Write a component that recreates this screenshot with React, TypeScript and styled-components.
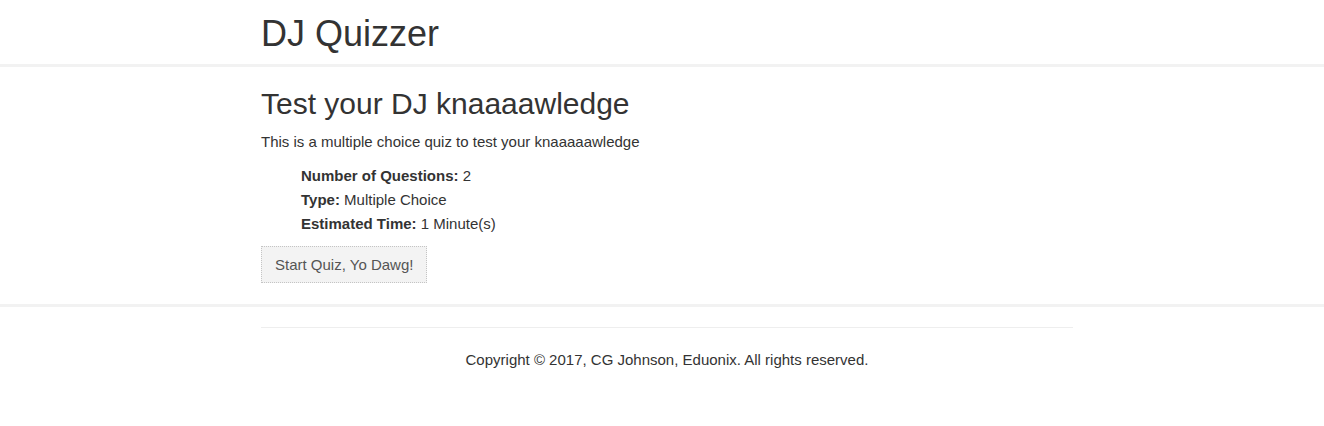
import React from 'react';
import styled, { createGlobalStyle } from 'styled-components';

const GlobalStyle = createGlobalStyle`
  body {
    margin: 0;
    background: #fff;
    color: #333;
    font-family: "Liberation Sans", Arial, Helvetica, sans-serif;
    font-size: 15px;
    line-height: 20px;
  }
`;

const quizInfo = [
  { label: 'Number of Questions:', value: '2' },
  { label: 'Type:', value: 'Multiple Choice' },
  { label: 'Estimated Time:', value: '1 Minute(s)' },
];

const App = () => {
  return (
    <>
      <GlobalStyle />
      <Header>
        <Container>
          <Brand>DJ Quizzer</Brand>
        </Container>
      </Header>

      <Main>
        <Container>
          <Title>Test your DJ knaaaawledge</Title>
          <Lead>This is a multiple choice quiz to test your knaaaaawledge</Lead>
          <InfoList>
            {quizInfo.map((item) => (
              <InfoItem key={item.label}>
                <strong>{item.label}</strong> {item.value}
              </InfoItem>
            ))}
          </InfoList>
          <StartButton>Start Quiz, Yo Dawg!</StartButton>
        </Container>
      </Main>

      <Footer>
        <Container>
          <Rule />
          <Copy>Copyright &copy; 2017, CG Johnson, Eduonix. All rights reserved.</Copy>
        </Container>
      </Footer>
    </>
  );
};

export default App;

const Container = styled.div`
  width: 812px;
  margin-left: calc(50% - 401px);
`;

const Header = styled.header`
  height: 64px;
  border-bottom: 3px solid #f2f2f2;
`;

const Brand = styled.h1`
  margin: 0;
  padding-top: 12px;
  font-size: 36px;
  font-weight: 400;
  line-height: 44px;
  color: #333;
`;

const Main = styled.main`
  padding: 20px 0 21px;
  border-bottom: 3px solid #f2f2f2;
`;

const Title = styled.h2`
  margin: 0 0 12px;
  font-size: 30px;
  font-weight: 400;
  line-height: 33px;
  color: #333;
`;

const Lead = styled.p`
  margin: 0 0 12px;
`;

const InfoList = styled.ul`
  list-style: none;
  margin: 0 0 10px;
  padding-left: 40px;
`;

const InfoItem = styled.li`
  line-height: 24px;

  strong {
    font-weight: 700;
  }
`;

const StartButton = styled.button`
  display: inline-block;
  padding: 8px 13px;
  background: #f3f3f3;
  border: 1px dotted #c4c4c4;
  color: #555;
  font-family: inherit;
  font-size: 15px;
  line-height: 19px;
  cursor: pointer;
`;

const Footer = styled.footer`
  padding-top: 20px;
`;

const Rule = styled.hr`
  margin: 0;
  border: 0;
  border-top: 1px solid #eee;
`;

const Copy = styled.p`
  margin: 22px 0 0;
  text-align: center;
`;
